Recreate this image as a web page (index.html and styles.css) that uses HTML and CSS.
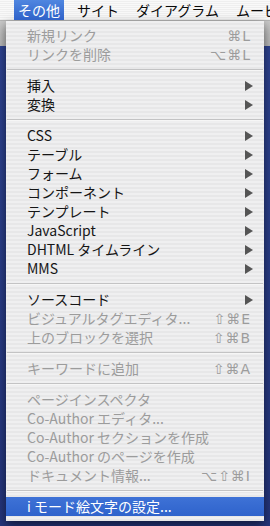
FILE: index.html
```html
<!DOCTYPE html>
<html lang="ja">
<head>
    <meta charset="UTF-8">
    <meta name="viewport" content="width=device-width, initial-scale=1.0">
    <title>その他メニュー</title>
    <link rel="stylesheet" href="styles.css">
</head>
<body>
    <div class="menubar">
        <span class="title active">その他</span>
        <span class="title">サイト</span>
        <span class="title">ダイアグラム</span>
        <span class="title">ムービー</span>
    </div>

    <div class="menu">
        <div class="item disabled"><span>新規リンク</span><span class="key">⌘L</span></div>
        <div class="item disabled"><span>リンクを削除</span><span class="key">⌥⌘L</span></div>
        <div class="sep"></div>
        <div class="item"><span>挿入</span><span class="arrow"></span></div>
        <div class="item"><span>変換</span><span class="arrow"></span></div>
        <div class="sep"></div>
        <div class="item"><span>CSS</span><span class="arrow"></span></div>
        <div class="item"><span>テーブル</span><span class="arrow"></span></div>
        <div class="item"><span>フォーム</span><span class="arrow"></span></div>
        <div class="item"><span>コンポーネント</span><span class="arrow"></span></div>
        <div class="item"><span>テンプレート</span><span class="arrow"></span></div>
        <div class="item"><span>JavaScript</span><span class="arrow"></span></div>
        <div class="item"><span>DHTML タイムライン</span><span class="arrow"></span></div>
        <div class="item"><span>MMS</span><span class="arrow"></span></div>
        <div class="sep"></div>
        <div class="item"><span>ソースコード</span><span class="arrow"></span></div>
        <div class="item disabled"><span>ビジュアルタグエディタ...</span><span class="key">⇧⌘E</span></div>
        <div class="item disabled"><span>上のブロックを選択</span><span class="key">⇧⌘B</span></div>
        <div class="sep"></div>
        <div class="item disabled"><span>キーワードに追加</span><span class="key">⇧⌘A</span></div>
        <div class="sep"></div>
        <div class="item disabled"><span>ページインスペクタ</span></div>
        <div class="item disabled"><span>Co-Author エディタ...</span></div>
        <div class="item disabled"><span>Co-Author セクションを作成</span></div>
        <div class="item disabled"><span>Co-Author のページを作成</span></div>
        <div class="item disabled"><span>ドキュメント情報...</span><span class="key">⌥⇧⌘I</span></div>
        <div class="sep"></div>
        <div class="item selected"><span>i モード絵文字の設定...</span></div>
    </div>
</body>
</html>
```

FILE: styles.css
```css
body {
    margin: 0;
    height: 526px;
    overflow: hidden;
    font-family: "Noto Sans CJK JP", "Noto Sans", sans-serif;
    font-size: 14px;
    background:
        linear-gradient(#c9c9c9, #b8b8b8) 0 21px / 100% 25px no-repeat,
        linear-gradient(#2f4594, #24357c);
}

/* top bar */
.menubar {
    display: flex;
    height: 21px;
    padding-left: 14px;
    background: repeating-linear-gradient(#f9f9f9 0, #f9f9f9 1px, #efefef 1px, #efefef 2px);
    border-bottom: 1px solid #b5b5b5;
    box-sizing: border-box;
    white-space: nowrap;
    overflow: hidden;
}

.title {
    padding: 0 4px;
    margin-right: 9px;
    line-height: 20px;
    font-size: 14px;
    color: #0a0a0a;
}

.title.active {
    background: linear-gradient(#4f86e0, #2f62c9);
    color: #ffffff;
}

/* drop down */
.menu {
    width: 258px;
    margin-left: 6px;
    padding: 5px 0 5px;
    background: repeating-linear-gradient(#efeff0 0, #efeff0 2px, #e7e7e8 2px, #e7e7e8 4px);
    box-shadow: 0 4px 10px rgba(0, 0, 0, 0.55);
    box-sizing: border-box;
}

.item {
    display: flex;
    justify-content: space-between;
    align-items: center;
    height: 19px;
    padding: 0 11px 0 21px;
    color: #161616;
    white-space: nowrap;
}

.item span:first-child {
    margin-top: -2px;
}

.item.disabled {
    color: #9c9c9c;
}

.item.selected {
    background: linear-gradient(#3e72d6, #2f63cc);
    color: #ffffff;
}

.key {
    font-family: "DejaVu Sans", sans-serif;
    font-size: 14px;
    letter-spacing: 1px;
    padding-right: 2px;
}

.arrow {
    width: 0;
    height: 0;
    border-left: 8px solid #555;
    border-top: 5px solid transparent;
    border-bottom: 5px solid transparent;
}

.sep {
    height: 12px;
    padding-top: 5px;
    box-sizing: border-box;
}

.sep::after {
    content: "";
    display: block;
    margin: 0 1px;
    height: 1px;
    background: #c3c3c4;
    border-bottom: 1px solid #f6f6f6;
}
```
